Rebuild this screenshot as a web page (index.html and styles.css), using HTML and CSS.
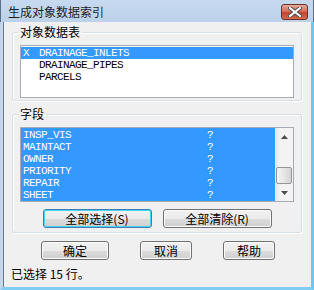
FILE: index.html
```html
<!DOCTYPE html>
<html>
<head>
  <title>生成对象数据索引</title>
  <link rel="stylesheet" href="styles.css">
</head>
<body>

<div class="window">
  <!-- Title bar -->
  <div class="titlebar">
    <span class="title">生成对象数据索引</span>
    <div class="close">
      <svg width="14" height="10" viewBox="0 0 14 10">
        <path d="M2 1 L12 9 M12 1 L2 9" stroke="#4a4a4a" stroke-width="4" stroke-linecap="square"/>
        <path d="M2 1 L12 9 M12 1 L2 9" stroke="#fff" stroke-width="2" stroke-linecap="square"/>
      </svg>
    </div>
  </div>

  <div class="client">
    <fieldset class="group">
      <legend>对象数据表</legend>
      <div class="listbox tables">
        <div class="row sel"><span class="mark">X</span>DRAINAGE_INLETS</div>
        <div class="row"><span class="mark"></span>DRAINAGE_PIPES</div>
        <div class="row"><span class="mark"></span>PARCELS</div>
      </div>
    </fieldset>

    <fieldset class="group">
      <legend>字段</legend>
      <div class="listbox fields">
        <div class="rows">
          <div class="row sel"><span class="name">INSP_VIS</span>?</div>
          <div class="row sel"><span class="name">MAINTACT</span>?</div>
          <div class="row sel"><span class="name">OWNER</span>?</div>
          <div class="row sel"><span class="name">PRIORITY</span>?</div>
          <div class="row sel"><span class="name">REPAIR</span>?</div>
          <div class="row sel"><span class="name">SHEET</span>?</div>
        </div>
        <div class="scrollbar">
          <div class="arrow"><svg width="7" height="4" viewBox="0 0 7 4"><path d="M3.5 0 L7 4 L0 4 Z" fill="#4d4d4d"/></svg></div>
          <div class="track"><div class="thumb"></div></div>
          <div class="arrow"><svg width="7" height="4" viewBox="0 0 7 4"><path d="M0 0 L7 0 L3.5 4 Z" fill="#4d4d4d"/></svg></div>
        </div>
      </div>
      <div class="group-buttons">
        <button class="btn default">全部选择(S)</button>
        <button class="btn">全部清除(R)</button>
      </div>
    </fieldset>

    <div class="main-buttons">
      <button class="btn ok">确定</button>
      <button class="btn small">取消</button>
      <button class="btn small">帮助</button>
    </div>

    <div class="status">已选择 15 行。</div>
  </div>
</div>

</body>
</html>
```

FILE: styles.css
```css
html, body {
  margin: 0;
  padding: 0;
  background: #f0f0f0;
}

body {
  font-family: "Noto Sans CJK SC", "Liberation Sans", sans-serif;
  font-size: 12px;
  color: #000;
}

.window {
  width: 314px;
  height: 290px;
  box-sizing: border-box;
  border-left: 3px solid #c3d6ec;
  border-right: 3px solid #6cc8ee;
  border-bottom: 3px solid #7fcdf0;
  box-shadow: inset 1px 0 0 #6a7c92;
  background: #f0f0f0;
  display: flex;
  flex-direction: column;
}

.titlebar {
  height: 22px;
  margin: 0 -3px 0 -3px;
  padding: 0 5px 0 7px;
  display: flex;
  align-items: center;
  justify-content: space-between;
  background: linear-gradient(#c6d9ef, #bcd2ea);
  border-right: 1px solid #5d6f86;
  border-left: 1px solid #5d6f86;
}

.title {
  font-size: 12px;
  line-height: 14px;
  color: #1e1e1e;
  margin-top: 1px;
}

.close {
  width: 25px;
  height: 14px;
  margin-top: 2px;
  border: 1px solid #6f3328;
  border-radius: 3px;
  background: linear-gradient(#e4a99a, #d4705c 45%, #c4452f 55%, #d06a4e);
  display: flex;
  align-items: center;
  justify-content: center;
}

.client {
  flex: 1;
  padding: 0 9px;
  display: flex;
  flex-direction: column;
}

.group {
  margin: 3px 0 0 0;
  padding: 6px 7px 2px 7px;
  border: 1px solid #d5dfe5;
  border-radius: 3px;
  box-shadow: inset 1px 1px 0 #fff, 1px 1px 0 #fff;
  min-width: 0;
}

.group + .group {
  margin-top: 6px;
  padding-bottom: 4px;
}

.group legend {
  padding: 0 2px;
  margin-left: -2px;
  font-size: 12px;
  line-height: 14px;
}

.listbox {
  background: #fff;
  border: 1px solid #a5acb5;
  font-family: "Liberation Mono", monospace;
  font-size: 11px;
  letter-spacing: -0.6px;
}

.tables {
  height: 50px;
  padding-top: 1px;
}

.row {
  height: 12px;
  line-height: 12px;
  white-space: pre;
  display: flex;
  padding-left: 2px;
}

.row.sel {
  background: #3399ff;
  color: #fff;
}

.mark {
  width: 16px;
}

.fields {
  height: 73px;
  display: flex;
}

.fields .rows {
  flex: 1;
  background: #3399ff;
  padding-top: 1px;
}

.name {
  width: 184px;
}

.scrollbar {
  width: 17px;
  display: flex;
  flex-direction: column;
  background: linear-gradient(90deg, #e6e6e6, #f3f3f3 20%, #f3f3f3);
  border-left: 1px solid #e8e8e8;
}

.arrow {
  height: 17px;
  display: flex;
  align-items: center;
  justify-content: center;
}

.track {
  flex: 1;
  padding-top: 22px;
}

.thumb {
  height: 15px;
  margin: 0 1px 0 0;
  border: 1px solid #959595;
  border-radius: 2px;
  background: linear-gradient(90deg, #f3f3f3, #e6e6e6 50%, #d4d4d4);
}

.btn {
  height: 19px;
  padding: 0;
  font-family: "Noto Sans CJK SC", "Liberation Sans", sans-serif;
  font-size: 12px;
  line-height: 15px;
  color: #000;
  border: 1px solid #707070;
  border-radius: 3px;
  background: linear-gradient(#f2f2f2 0%, #ebebeb 50%, #dddddd 50%, #cfcfcf 100%);
  box-shadow: inset 0 0 0 1px #fcfcfc;
}

.btn.default {
  border-color: #3c7fb1;
  box-shadow: inset 0 0 0 1px #48d1f9;
}

.group-buttons {
  display: flex;
  justify-content: center;
  gap: 11px;
  margin-top: 7px;
}

.group-buttons .btn {
  width: 109px;
}

.main-buttons {
  display: flex;
  gap: 31px;
  padding-left: 29px;
  margin-top: 8px;
}

.btn.ok {
  width: 68px;
}

.btn.small {
  width: 52px;
}

.status {
  margin-top: 7px;
  margin-left: -1px;
  line-height: 14px;
}
```
